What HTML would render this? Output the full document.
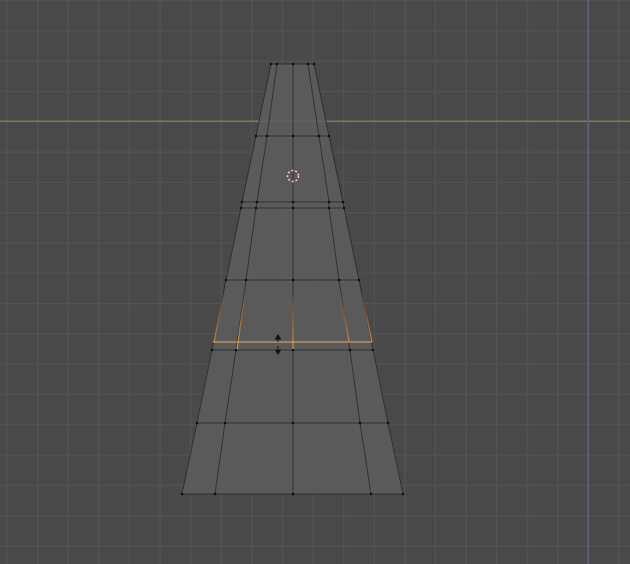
<!DOCTYPE html>
<html><head><style>html,body{margin:0;padding:0;background:#494949;overflow:hidden}svg{display:block}</style></head>
<body>
<svg width="630" height="564" viewBox="0 0 630 564" xmlns="http://www.w3.org/2000/svg">
<defs>
<pattern id="g" x="6.4" y="0" width="30.6" height="30.3" patternUnits="userSpaceOnUse">
<rect width="30.6" height="30.3" fill="#494949"/>
<rect x="0" y="0" width="1.2" height="30.3" fill="#535353"/>
<rect x="0" y="0" width="30.6" height="1.2" fill="#535353"/>
</pattern>
<linearGradient id="o" gradientUnits="userSpaceOnUse" x1="0" y1="290" x2="0" y2="351">
<stop offset="0" stop-color="#e8902a" stop-opacity="0"/>
<stop offset="0.5" stop-color="#e8902a" stop-opacity="0.5"/>
<stop offset="1" stop-color="#e8a050" stop-opacity="0.9"/>
</linearGradient>
</defs>
<rect width="630" height="564" fill="url(#g)"/>
<rect x="0" y="120.5" width="630" height="1.5" fill="#7a7a58"/>
<rect x="587.5" y="0" width="1.5" height="564" fill="#5e6678"/>
<polygon points="271,64 314,64 403,494 182,494" fill="#5d5d5d" fill-opacity="0.85"/>
<g stroke="#262626" stroke-width="1" fill="none" opacity="0.75">
<polyline points="271,64 256,136 242,202 241,208 226,280 212,350 197,423 182,494"/>
<polyline points="277,64 267,136 257,202 256,208 246,280 236,350 225,423 215,494"/>
<polyline points="293,64 293,494"/>
<polyline points="308,64 319,136 329,202 329,208 339,280 350,350 360,423 371,494"/>
<polyline points="314,64 329,136 343,202 344,208 359,280 373,350 388,423 403,494"/>
<line x1="271" y1="64" x2="314" y2="64"/>
<line x1="256" y1="136" x2="329" y2="136"/>
<line x1="242" y1="202" x2="343" y2="202"/>
<line x1="241" y1="208" x2="344" y2="208"/>
<line x1="226" y1="280" x2="359" y2="280"/>
<line x1="212" y1="350" x2="373" y2="350"/>
<line x1="197" y1="423" x2="388" y2="423"/>
<line x1="182" y1="494" x2="403" y2="494"/>
</g>
<g stroke="url(#o)" stroke-width="1.3" fill="none">
<line x1="224" y1="290" x2="214" y2="342"/>
<line x1="245" y1="290" x2="237" y2="350"/>
<line x1="293" y1="290" x2="293" y2="351"/>
<line x1="340" y1="290" x2="349" y2="342"/>
<line x1="361" y1="290" x2="372" y2="342"/>
</g>
<line x1="213" y1="342" x2="372" y2="342" stroke="#dca060" stroke-width="1.3" opacity="0.9"/>
<g fill="#111">
<circle cx="271" cy="64" r="1.3"/><circle cx="277" cy="64" r="1.3"/><circle cx="293" cy="64" r="1.3"/><circle cx="308" cy="64" r="1.3"/><circle cx="314" cy="64" r="1.3"/>
<circle cx="256" cy="136" r="1.3"/><circle cx="267" cy="136" r="1.3"/><circle cx="293" cy="136" r="1.3"/><circle cx="319" cy="136" r="1.3"/><circle cx="329" cy="136" r="1.3"/>
<circle cx="242" cy="202" r="1.3"/><circle cx="257" cy="202" r="1.3"/><circle cx="293" cy="202" r="1.3"/><circle cx="329" cy="202" r="1.3"/><circle cx="343" cy="202" r="1.3"/>
<circle cx="241" cy="208" r="1.3"/><circle cx="256" cy="208" r="1.3"/><circle cx="293" cy="208" r="1.3"/><circle cx="329" cy="208" r="1.3"/><circle cx="344" cy="208" r="1.3"/>
<circle cx="226" cy="280" r="1.3"/><circle cx="246" cy="280" r="1.3"/><circle cx="293" cy="280" r="1.3"/><circle cx="339" cy="280" r="1.3"/><circle cx="359" cy="280" r="1.3"/>
<circle cx="212" cy="350" r="1.3"/><circle cx="236" cy="350" r="1.3"/><circle cx="293" cy="350" r="1.3"/><circle cx="350" cy="350" r="1.3"/><circle cx="373" cy="350" r="1.3"/>
<circle cx="197" cy="423" r="1.3"/><circle cx="225" cy="423" r="1.3"/><circle cx="293" cy="423" r="1.3"/><circle cx="360" cy="423" r="1.3"/><circle cx="388" cy="423" r="1.3"/>
<circle cx="182" cy="494" r="1.3"/><circle cx="215" cy="494" r="1.3"/><circle cx="293" cy="494" r="1.3"/><circle cx="371" cy="494" r="1.3"/><circle cx="403" cy="494" r="1.3"/>
</g>
<g fill="#111" stroke="#111" stroke-width="1">
<polygon points="278,335 275.5,339 280.5,339"/><line x1="278" y1="339" x2="278" y2="342"/>
<polygon points="278,354 275.5,350 280.5,350"/><line x1="278" y1="346" x2="278" y2="350"/>
</g>
<circle cx="293" cy="176" r="5.5" fill="none" stroke="#e8d0d0" stroke-width="1.5" stroke-dasharray="2 2"/>
<circle cx="293" cy="176" r="5.5" fill="none" stroke="#b04040" stroke-width="1.5" stroke-dasharray="2 2" stroke-dashoffset="2" opacity="0.6"/>
</svg>
</body></html>
